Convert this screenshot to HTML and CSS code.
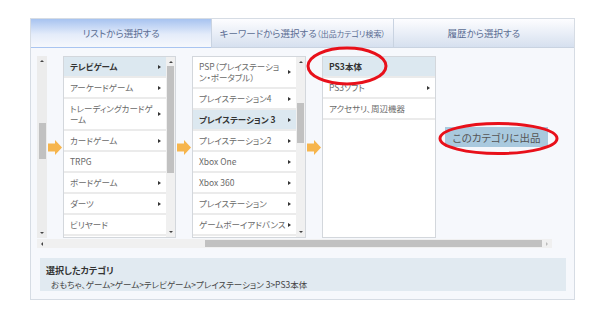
FILE: index.html
```html
<!DOCTYPE html>
<html lang="ja">
<head>
  <meta charset="UTF-8" />
  <title>カテゴリ選択</title>
  <link rel="stylesheet" href="styles.css">
</head>
<body>
  <div class="panel">
    <div class="tabs">
      <div class="tab active">リストから選択する</div>
      <div class="tab">キーワードから選択する<small>（出品カテゴリ検索）</small></div>
      <div class="tab">履歴から選択する</div>
    </div>

    <div class="content">
      <div class="browser">
        <div class="columns">
          <div class="vbar edge">
            <span class="up"></span>
            <span class="thumb"></span>
            <span class="down"></span>
          </div>
          <svg class="next" width="14" height="15" viewBox="0 0 14 15"><path d="M0 3.5H7V0L14 7.5L7 15V11.5H0Z" fill="#f6b54d"/></svg>

          <div class="col">
            <ul class="items">
              <li class="current more">テレビゲーム</li>
              <li class="more">アーケードゲーム</li>
              <li class="more">トレーディングカードゲーム</li>
              <li class="more">カードゲーム</li>
              <li>TRPG</li>
              <li class="more">ボードゲーム</li>
              <li class="more">ダーツ</li>
              <li>ビリヤード</li>
            </ul>
            <div class="vbar">
              <span class="up"></span>
              <span class="thumb long"></span>
              <span class="down"></span>
            </div>
          </div>
          <svg class="next" width="14" height="15" viewBox="0 0 14 15"><path d="M0 3.5H7V0L14 7.5L7 15V11.5H0Z" fill="#f6b54d"/></svg>

          <div class="col">
            <ul class="items">
              <li class="more">PSP（プレイステーション・ポータブル）</li>
              <li class="more">プレイステーション4</li>
              <li class="current more">プレイステーション 3</li>
              <li class="more">プレイステーション2</li>
              <li class="more">Xbox One</li>
              <li class="more">Xbox 360</li>
              <li class="more">プレイステーション</li>
              <li class="more">ゲームボーイアドバンス</li>
            </ul>
            <div class="vbar">
              <span class="up"></span>
              <span class="thumb short"></span>
              <span class="down"></span>
            </div>
          </div>
          <svg class="next" width="14" height="15" viewBox="0 0 14 15"><path d="M0 3.5H7V0L14 7.5L7 15V11.5H0Z" fill="#f6b54d"/></svg>

          <div class="col">
            <ul class="items">
              <li class="current">PS3本体</li>
              <li class="more">PS3ソフト</li>
              <li>アクセサリ、周辺機器</li>
            </ul>
          </div>

          <div class="action">
            <button type="button">このカテゴリに出品</button>
          </div>
        </div>

        <div class="hbar">
          <span class="left"></span>
          <span class="thumb"></span>
          <span class="right"></span>
        </div>
      </div>

      <div class="selected">
        <div class="sel-title">選択したカテゴリ</div>
        <div class="sel-path">おもちゃ、ゲーム&gt;ゲーム&gt;テレビゲーム&gt;プレイステーション 3&gt;PS3本体</div>
      </div>
    </div>

    <svg class="marks" width="545" height="282">
      <ellipse cx="316" cy="47" rx="39" ry="18" />
      <ellipse cx="467.5" cy="119.5" rx="58.5" ry="15" />
    </svg>
  </div>
</body>
</html>
```

FILE: styles.css
```css
body {
  margin: 0;
  background: #fff;
  font-family: "Noto Sans CJK JP", "Noto Sans", sans-serif;
  font-feature-settings: "palt";
  color: #555;
}
.panel {
  position: relative;
  box-sizing: border-box;
  width: 545px;
  margin: 18px 0 0 30px;
  border: 1px solid #d6dce4;
  background: #f6f8fc;
}
.tabs {
  display: flex;
  height: 29px;
}
.tab {
  flex: 1;
  display: flex;
  align-items: center;
  justify-content: center;
  font-size: 9.5px;
  color: #5b6d93;
  background: linear-gradient(#fdfdff, #d6e0ef);
  border-left: 1px solid #c9d3e1;
  border-bottom: 1px solid #c9d3e1;
}
.tab small {
  font-size: 8px;
}
.tab.active {
  background: linear-gradient(#a7c3f0, #e4ecfa 55%, #f6f8fc);
  border-left: none;
  border-bottom-color: transparent;
}
.content {
  padding: 8px 8px 8px 9px;
}
.browser {
  margin: 0 14px 0 -3px;
}
.columns {
  display: flex;
  height: 182px;
}
.next {
  flex: none;
  margin: 84px 0 0 1px;
}
.col {
  flex: none;
  display: flex;
  box-sizing: border-box;
  width: 113px;
  margin-left: 1px;
  border: 1px solid #d3d7dc;
  background: #fff;
  overflow: hidden;
}
.col + .next + .col {
  width: 114px;
}
.items {
  flex: 1;
  margin: 0;
  padding: 0;
  list-style: none;
}
.items li {
  position: relative;
  padding: 4px 7px 4px 6px;
  line-height: 11px;
  font-size: 8.5px;
  color: #6a6a6a;
  border-bottom: 2px solid #ebebeb;
}
.items li.current {
  background: #dce8f0;
  color: #333;
  font-weight: bold;
}
.items li.more::after {
  content: "";
  position: absolute;
  right: 5px;
  top: 50%;
  margin-top: -2px;
  border-left: 3px solid #333;
  border-top: 2px solid transparent;
  border-bottom: 2px solid transparent;
}
.vbar {
  flex: none;
  display: flex;
  flex-direction: column;
  align-items: center;
  width: 9px;
  background: #f0f0f0;
}
.vbar.edge {
  width: 10px;
  background: #ececec;
}
.vbar .up,
.vbar .down {
  width: 0;
  height: 0;
  border-left: 2px solid transparent;
  border-right: 2px solid transparent;
}
.vbar .up {
  margin-top: 4px;
  border-bottom: 2px solid #444;
}
.vbar .down {
  margin-top: auto;
  margin-bottom: 4px;
  border-top: 2px solid #444;
}
.vbar .thumb {
  width: 7px;
  height: 36px;
  margin-top: 61px;
  background: #c1c1c1;
}
.vbar .thumb.long {
  height: 107px;
  margin-top: 3px;
}
.vbar .thumb.short {
  height: 40px;
  margin-top: 40px;
}
.action {
  flex: 1;
  padding-left: 9px;
}
.action button {
  width: 103px;
  height: 20px;
  margin-top: 71px;
  padding: 0;
  border: none;
  background: #a9c9de;
  color: #555;
  font-family: inherit;
  font-feature-settings: "palt";
  font-size: 10.5px;
}
.hbar {
  display: flex;
  align-items: center;
  height: 9px;
  margin-top: 1px;
  background: #f0f0f0;
}
.hbar .left,
.hbar .right {
  width: 0;
  height: 0;
  border-top: 2px solid transparent;
  border-bottom: 2px solid transparent;
}
.hbar .left {
  margin-left: 4px;
  border-right: 2px solid #444;
}
.hbar .right {
  margin: 0 4px 0 auto;
  border-left: 2px solid #bbb;
}
.hbar .thumb {
  width: 337px;
  height: 7px;
  margin-left: 162px;
  background: #c1c1c1;
}
.selected {
  height: 33px;
  margin-top: 10px;
  box-sizing: border-box;
  padding: 6px 6px 0;
  background: #e1eaf1;
}
.sel-title {
  font-size: 9px;
  font-weight: bold;
  color: #333;
  line-height: 13px;
}
.sel-path {
  padding-left: 5px;
  font-size: 8.5px;
  color: #444;
  line-height: 15px;
}
.marks {
  position: absolute;
  left: 0;
  top: 0;
  pointer-events: none;
}
.marks ellipse {
  fill: none;
  stroke: #e8101a;
  stroke-width: 3;
}
```
